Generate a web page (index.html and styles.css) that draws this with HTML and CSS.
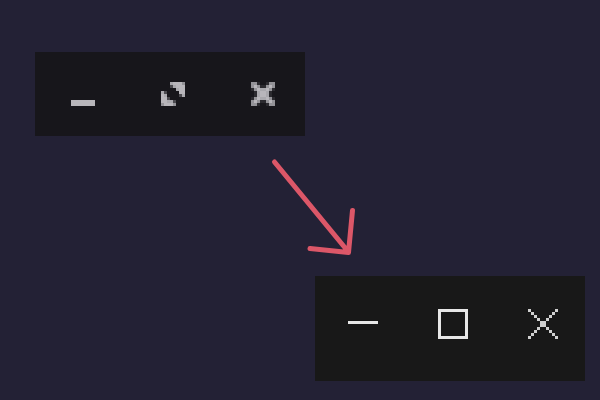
FILE: index.html
```html
<!DOCTYPE html>
<html lang="en">
<head>
<meta charset="utf-8">
<title>Window controls</title>
<link rel="stylesheet" href="styles.css">
</head>
<body>
<main class="stage">
  <div class="controls controls-old">
    <svg class="icon" viewBox="0 0 8 8"><path d="M0 6h8v2H0z"/></svg>
    <svg class="icon" viewBox="0 0 8 8">
      <path d="M4 0h3v1H4zM5 1h3v1H5zM6 2h2v2H6zM0 4h1v3H0zM0 5h2v2H0zM1 6h2v1H1zM1 7h3v1H1z"/>
      <path class="light" d="M3 0h1v1H3zM4 1h1v1H4zM5 2h1v1H5zM7 4h1v1H7zM0 3h1v1H0zM1 4h1v1H1zM2 6h1v1H2zM3 6h1v1H3z"/>
      <path class="mid" d="M7 0h1v1H7zM0 7h1v1H0zM4 7h1v1H4z"/>
      <path class="dim" d="M3 1h1v1H3zM6 4h1v1H6zM1 3h1v1H1zM4 6h1v1H4zM2 5h1v1H2z"/>
    </svg>
    <svg class="icon" viewBox="0 0 8 8">
      <path d="M3 3h2v2H3zM1 1h1v1H1zM6 1h1v1H6zM1 6h1v1H1zM6 6h1v1H6zM2 2h1v1H2zM5 2h1v1H5zM2 5h1v1H2zM5 5h1v1H5z"/>
      <path class="light" d="M3 2h2v1H3zM2 3h1v2H2zM5 3h1v2H5zM3 5h2v1H3z"/>
      <path class="mid" d="M0 0h2v1H0zM6 0h2v1H6zM0 1h1v1H0zM7 1h1v1H7zM0 6h1v2H0zM1 7h1v1H1zM6 7h2v1H6zM7 6h1v1H7zM2 1h1v1H2zM5 1h1v1H5zM2 6h1v1H2zM5 6h1v1H5zM1 2h1v1H1zM6 2h1v1H6zM1 5h1v1H1zM6 5h1v1H6z"/>
      <path class="faint" d="M2 0h1v1H2zM5 0h1v1H5zM0 2h1v1H0zM7 2h1v1H7zM0 5h1v1H0zM7 5h1v1H7zM2 7h1v1H2zM5 7h1v1H5zM1 3h1v2H1zM6 3h1v2H6zM3 1h2v1H3zM3 6h2v1H3z"/>
    </svg>
  </div>
  <svg class="arrow" viewBox="265 151 100 110">
    <path d="M274.500 162L348.500 252M352.500 210.500L348.500 252.500L310 248.500"/>
  </svg>
  <div class="controls controls-new">
    <svg class="icon" viewBox="0 0 10 10"><path d="M0 4h10v1H0z"/></svg>
    <svg class="icon" viewBox="0 0 10 10"><path fill-rule="evenodd" d="M0 0h10v10H0zM1 1v8h8V1z"/></svg>
    <svg class="icon close" viewBox="0 0 10 10"><path d="M0 0h1v1H0zM1 1h1v1H1zM2 2h1v1H2zM3 3h1v1H3zM4 4h2v2H4zM6 6h1v1H6zM7 7h1v1H7zM8 8h1v1H8zM9 9h1v1H9zM9 0h1v1H9zM8 1h1v1H8zM7 2h1v1H7zM6 3h1v1H6zM3 6h1v1H3zM2 7h1v1H2zM1 8h1v1H1zM0 9h1v1H0z"/></svg>
  </div>
</main>
</body>
</html>
```
FILE: styles.css
```css
body {
  margin: 0;
  background: #232135;
}
.stage {
  box-sizing: border-box;
  height: 400px;
  padding: 52px 15px 19px 35px;
  display: flex;
  flex-direction: column;
  justify-content: space-between;
}
.controls {
  display: grid;
  grid-template-columns: repeat(3, 90px);
  justify-items: center;
  align-items: center;
}
.controls-old {
  align-self: flex-start;
  height: 84px;
  padding-left: 3px;
  width: 267px;
  background: #17161b;
  fill: #b8b6bb;
}
.controls-new {
  align-self: flex-end;
  width: 267px;
  height: 96px;
  padding: 0 0 9px 3px;
  background: #181818;
  fill: #e7e7e7;
}
.icon {
  display: block;
  shape-rendering: crispEdges;
}
.controls-old .icon {
  width: 24px;
  height: 24px;
}
.controls-new .icon {
  width: 30px;
  height: 30px;
}
.light {
  fill: #a9a8ad;
}
.mid {
  fill: #949398;
}
.dim {
  fill: #4b4a4f;
}
.faint {
  fill: #2b2a2f;
}
.close {
  fill: #d0d0d0;
}
.arrow {
  width: 100px;
  height: 110px;
  margin-left: 230px;
  fill: none;
  stroke: #dc5768;
  stroke-width: 5;
  stroke-linecap: round;
  stroke-linejoin: round;
}
```
